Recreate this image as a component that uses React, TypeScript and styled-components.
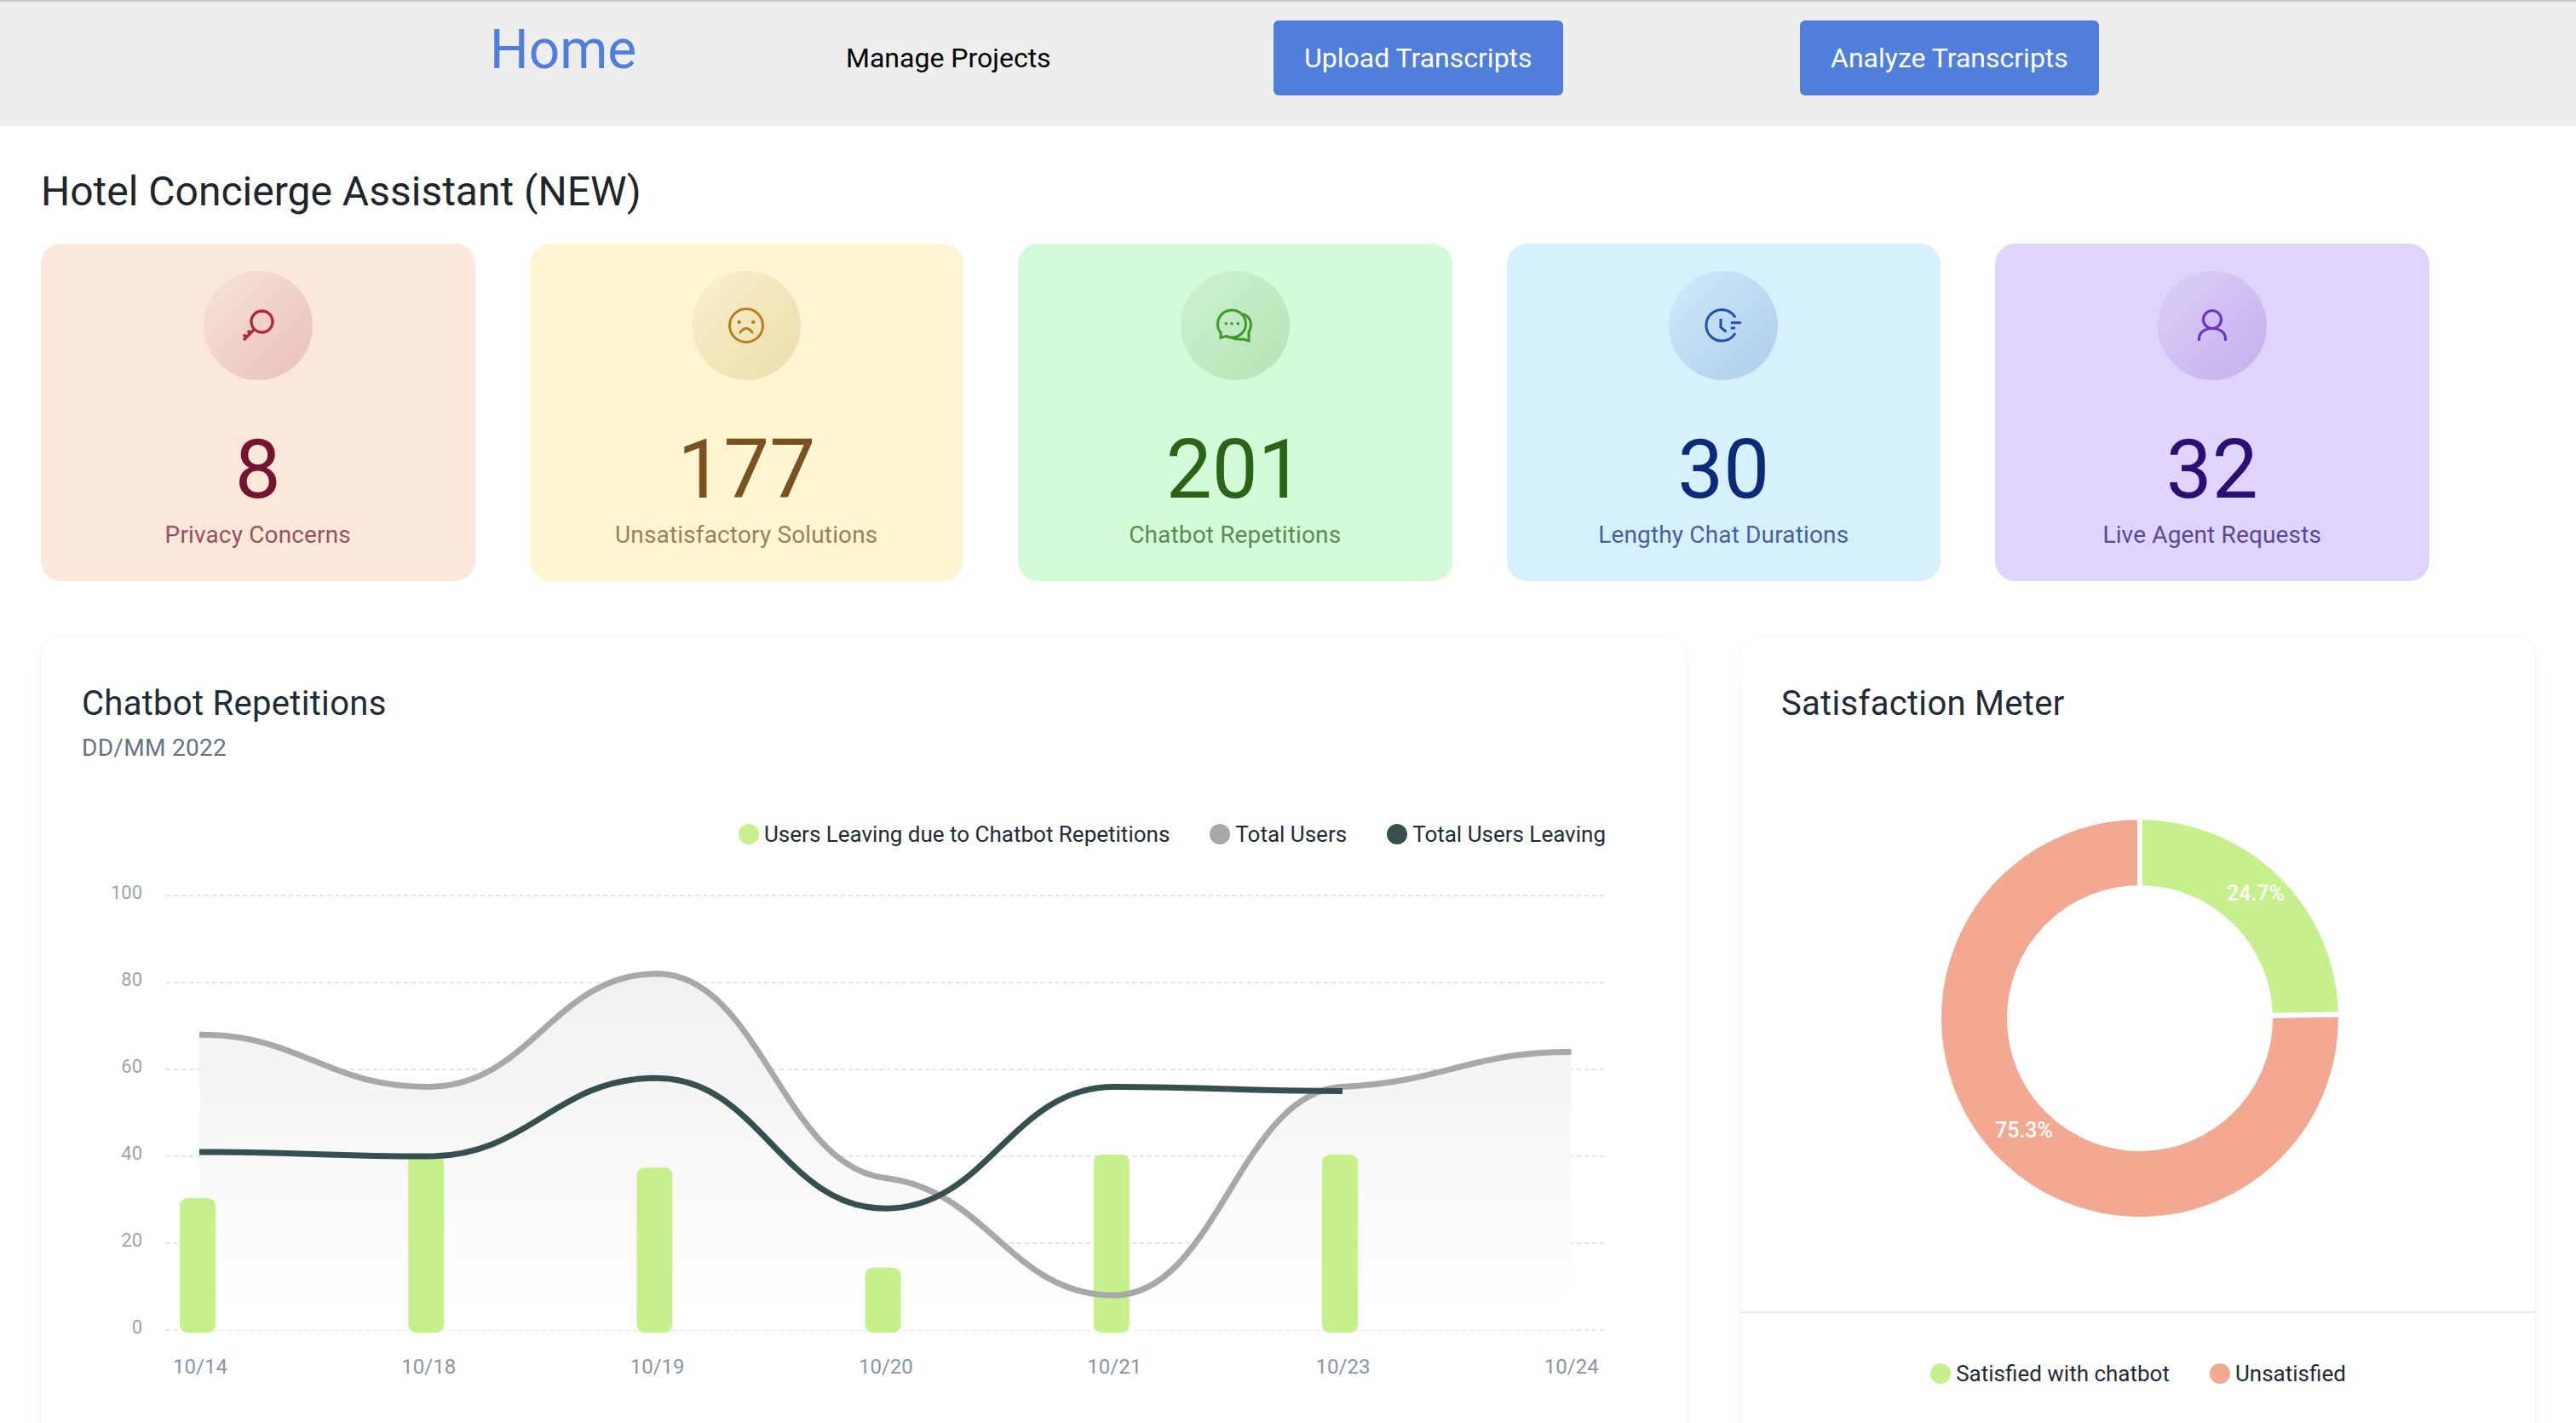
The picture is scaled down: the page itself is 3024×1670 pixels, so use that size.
import React from "react";
import styled, { createGlobalStyle } from "styled-components";

const GlobalStyle = createGlobalStyle`
  html, body {
    margin: 0;
    padding: 0;
    background: #fff;
    font-family: Roboto, "Liberation Sans", sans-serif;
  }
  * { box-sizing: border-box; }
`;

const Page = styled.div`
  width: 3024px;
  height: 1670px;
  overflow: hidden;
  background: #fff;
`;

const NavBar = styled.nav`
  display: grid;
  grid-template-columns: 418px 502px 618px auto;
  align-items: start;
  height: 148px;
  padding: 22px 0 0 575px;
  border-top: 2px solid #c9c9c9;
  background: #eeeeee;
`;

const HomeLink = styled.a`
  font-size: 64px;
  line-height: 75px;
  margin-top: -3px;
  color: #4f7edb;
`;

const NavLink = styled.a`
  font-size: 32px;
  line-height: 88px;
  color: #000;
`;

const NavButton = styled.button`
  justify-self: start;
  height: 88px;
  padding: 0 36px;
  border: none;
  border-radius: 6px;
  background: #4f7edb;
  color: #fff;
  font-family: inherit;
  font-size: 32px;
`;

const Main = styled.main`
  padding: 0 48px;
`;

const Heading = styled.h1`
  margin: 0;
  height: 138px;
  padding-top: 47px;
  font-size: 48px;
  line-height: 60px;
  font-weight: 400;
  color: #212529;
`;

const StatRow = styled.div`
  display: flex;
  gap: 64px;
`;

const StatCard = styled.div<{ $bg: string; $fg: string }>`
  display: flex;
  flex-direction: column;
  align-items: center;
  width: 509.5px;
  height: 396px;
  padding-top: 32px;
  border-radius: 24px;
  background: ${(p) => p.$bg};
  color: ${(p) => p.$fg};
`;

const IconBadge = styled.div<{ $from: string; $to: string }>`
  display: flex;
  align-items: center;
  justify-content: center;
  width: 128px;
  height: 128px;
  border-radius: 50%;
  background: linear-gradient(135deg, ${(p) => p.$from}, ${(p) => p.$to});
`;

const StatValue = styled.div`
  margin-top: 49px;
  font-size: 96px;
  line-height: 112px;
`;

const StatLabel = styled.div`
  margin-top: 3px;
  font-size: 28px;
  line-height: 36px;
  letter-spacing: 0.15px;
  opacity: 0.72;
`;

const PanelRow = styled.div`
  display: flex;
  gap: 64px;
  margin-top: 64px;
`;

const Panel = styled.section<{ $width: number }>`
  flex: none;
  width: ${(p) => p.$width}px;
  height: 1000px;
  border-radius: 24px;
  background: #fff;
  box-shadow: 0 0 2px rgba(145, 158, 171, 0.2), 0 12px 24px -4px rgba(145, 158, 171, 0.12);
`;

const PanelHeader = styled.header`
  padding: 50px 48px 0;
`;

const PanelTitle = styled.h2`
  margin: 0;
  font-size: 40px;
  line-height: 60px;
  font-weight: 400;
  letter-spacing: 0.3px;
  color: #212b36;
`;

const PanelSub = styled.div`
  margin-top: 2px;
  font-size: 28px;
  line-height: 40px;
  letter-spacing: 0.3px;
  color: #637381;
`;

const Legend = styled.div<{ $center?: boolean }>`
  display: flex;
  align-items: center;
  justify-content: ${(p) => (p.$center ? "center" : "flex-end")};
  gap: 47px;
`;

const ChartLegend = styled(Legend)`
  height: 40px;
  margin-top: 61px;
  padding-right: 94px;
`;

const DonutLegend = styled(Legend)`
  height: 144px;
  margin-top: -1px;
  border-top: 2px solid #e6e8eb;
  padding-left: 1px;
`;

const LegendItem = styled.div`
  display: flex;
  align-items: center;
  gap: 6px;
  font-size: 26px;
  color: #212b36;
`;

const LegendDot = styled.span<{ $color: string }>`
  flex: none;
  width: 24px;
  height: 24px;
  border-radius: 50%;
  background: ${(p) => p.$color};
`;

const ChartSvg = styled.svg`
  display: block;
  margin-top: 11px;
`;

const DonutSvg = styled.svg`
  display: block;
`;

const GREEN = "#c6f08c";
const SALMON = "#f3a892";
const GREY = "#a8a8a8";
const DARK = "#35504f";

// key
const KeyIcon = () => (
  <svg width="64" height="64" viewBox="0 0 64 64" fill="none" stroke="#b02a3a" strokeWidth="3.4">
    <circle cx="36.5" cy="27.5" r="12.5" />
    <path d="M27.5 36.5L15 49M23 41.5l-3-3.5M18.5 46l-3.5-3.5" strokeWidth="3.6" />
  </svg>
);

const SadIcon = () => (
  <svg width="64" height="64" viewBox="0 0 64 64" fill="none" stroke="#b58022" strokeWidth="3">
    <circle cx="32" cy="32" r="19.5" />
    <circle cx="23.7" cy="28" r="2.2" fill="#b58022" stroke="none" />
    <circle cx="40.3" cy="28" r="2.2" fill="#b58022" stroke="none" />
    <path d="M25 40c2-3 4.500-4.500 7-4.500s5 1.500 7 4.500" strokeLinecap="round" />
  </svg>
);

const ChatIcon = () => (
  <svg width="64" height="64" viewBox="0 0 64 64" fill="none" stroke="#3f9a2a" strokeWidth="3">
    <path d="M15 46.500V40.500C12.500 37.500 11.500 34 11.500 30.500C11.500 21 19 14 28 14C37 14 44.500 21 44.500 30C44.500 39 37 46 28 46C25 46 23 45.300 21 44.500Z" />
    <path d="M41 18.500C47 20 50.500 25.500 50.500 31C50.500 34.500 49.500 37 48 39.500V50L41.500 48C36 48.500 31 47.500 27 46" />
    <circle cx="21.300" cy="29.700" r="1.800" fill="#3f9a2a" stroke="none" />
    <circle cx="28" cy="29.700" r="1.800" fill="#3f9a2a" stroke="none" />
    <circle cx="35.300" cy="29.700" r="1.800" fill="#3f9a2a" stroke="none" />
  </svg>
);

const ClockIcon = () => (
  <svg width="64" height="64" viewBox="0 0 64 64" fill="none" stroke="#2350ad" strokeWidth="3">
    <path d="M46 22.500A18.300 18.300 0 1 0 46 41" />
    <path d="M29 24V34L35.400 39.500" />
    <path d="M40.800 28.700H52.800M40.800 35H46" />
  </svg>
);

const UserIcon = () => (
  <svg width="64" height="64" viewBox="0 0 64 64" fill="none" stroke="#6a38c7" strokeWidth="3.2">
    <ellipse cx="32" cy="25" rx="10.500" ry="10.500" />
    <path d="M16.500 50V48C16.500 40 23 35.500 32 35.500C41 35.500 47.500 40 47.500 48V50" />
  </svg>
);

const stats = [
  { value: "8", label: "Privacy Concerns", bg: "#fbe8db", fg: "#74142f", from: "#f8e4da", to: "#e8bfb8", Icon: KeyIcon },
  { value: "177", label: "Unsatisfactory Solutions", bg: "#fef6d3", fg: "#7a5220", from: "#f9f0cd", to: "#ebdcaa", Icon: SadIcon },
  { value: "201", label: "Chatbot Repetitions", bg: "#d3fbd7", fg: "#2b6318", from: "#cdf2cf", to: "#b5e3b5", Icon: ChatIcon },
  { value: "30", label: "Lengthy Chat Durations", bg: "#d6f1fd", fg: "#0c2a7a", from: "#cfeafa", to: "#acccea", Icon: ClockIcon },
  { value: "32", label: "Live Agent Requests", bg: "#dfd4fb", fg: "#2b0f75", from: "#dbcff8", to: "#c3b0ec", Icon: UserIcon },
];

// chart coords below are local to the svg, which starts at page (48, 1010)
const ORIGIN_X = 186;
const STEP_X = 268.4;
const ZERO_Y = 551;
const UNIT_Y = 5.1;

const toPoints = (values: number[]) =>
  values.map((v, i) => [ORIGIN_X + i * STEP_X, ZERO_Y - v * UNIT_Y] as [number, number]);

// cubic through the points, nearly flat at every point like the chart lib does
function smoothPath(pts: [number, number][]) {
  const slopes = pts.slice(1).map((p, i) => (p[1] - pts[i][1]) / (p[0] - pts[i][0]));
  const tangents = pts.map((_, i) => {
    if (i === 0 || i === pts.length - 1) return 0;
    const a = slopes[i - 1];
    const b = slopes[i];
    if (a * b <= 0) return 0;
    return ((2 * a * b) / (a + b)) * 0.18;
  });
  let d = `M${pts[0][0]} ${pts[0][1]}`;
  for (let i = 0; i < pts.length - 1; i++) {
    const dx = (pts[i + 1][0] - pts[i][0]) * 0.45;
    d += `C${pts[i][0] + dx} ${pts[i][1] + tangents[i] * dx} ${pts[i + 1][0] - dx} ${pts[i + 1][1] - tangents[i + 1] * dx} ${pts[i + 1][0]} ${pts[i + 1][1]}`;
  }
  return d;
}

const totalUsers = toPoints([68, 56, 82, 35, 8, 56, 64]);
const totalLeaving = toPoints([41, 40, 58, 28, 56, 55]);
const bars = [30, 40, 37, 14, 40, 40];
const bucketLabels = ["10/14", "10/18", "10/19", "10/20", "10/21", "10/23", "10/24"];

function LineChart() {
  const gray = smoothPath(totalUsers);
  const last = totalUsers[totalUsers.length - 1];
  return (
    <ChartSvg width="1931" height="660" viewBox="0 0 1931 660">
      <defs>
        <linearGradient id="areaFill" x1="0" y1="0" x2="0" y2="1">
          <stop offset="0" stopColor="#f0f0f0" />
          <stop offset="0.95" stopColor="#ffffff" />
        </linearGradient>
      </defs>
      {[100, 80, 60, 40, 20, 0].map((v) => (
        <g key={v}>
          <line x1="147" x2="1835" y1={ZERO_Y - v * UNIT_Y} y2={ZERO_Y - v * UNIT_Y} stroke="#e3e5e8" strokeWidth="2" strokeDasharray="5 4" />
          <text x="119" y={ZERO_Y - v * UNIT_Y + 4} textAnchor="end" fontSize="22" fill="#9aa3ae">{v}</text>
        </g>
      ))}
      <path d={`${gray}L${last[0]} ${ZERO_Y}L${ORIGIN_X} ${ZERO_Y}Z`} fill="url(#areaFill)" />
      {bars.map((v, i) => (
        <rect key={i} x={ORIGIN_X - 23 + i * 268.2} y={ZERO_Y - 2 - v * UNIT_Y} width="42" height={v * UNIT_Y + 5} rx="9" fill={GREEN} />
      ))}
      <path d={gray} fill="none" stroke={GREY} strokeWidth="7" />
      <path d={smoothPath(totalLeaving)} fill="none" stroke={DARK} strokeWidth="7" />
      {bucketLabels.map((t, i) => (
        <text key={t} x={ORIGIN_X + 1 + i * 268.3} y="602" textAnchor="middle" fontSize="24" fill="#8a94a3">{t}</text>
      ))}
    </ChartSvg>
  );
}

const CX = 469;
const CY = 339;
const polar = (r: number, deg: number) => {
  const a = (deg * Math.PI) / 180;
  return `${CX + r * Math.sin(a)} ${CY - r * Math.cos(a)}`;
};
const ringSlice = (from: number, to: number) => {
  const large = to - from > 180 ? 1 : 0;
  return `M${polar(236, from)}A236 236 0 ${large} 1 ${polar(236, to)}L${polar(153, to)}A153 153 0 ${large} 0 ${polar(153, from)}Z`;
};

function Donut() {
  return (
    <DonutSvg width="933" height="684" viewBox="0 0 933 684">
      <path d={ringSlice(0, 88.9)} fill={GREEN} stroke="#fff" strokeWidth="6" />
      <path d={ringSlice(88.9, 360)} fill={SALMON} stroke="#fff" strokeWidth="6" />
      <text x="605" y="201" textAnchor="middle" fontSize="25" fontWeight="500" fill="#fff">24.7%</text>
      <text x="333" y="479" textAnchor="middle" fontSize="25" fontWeight="500" fill="#fff">75.3%</text>
    </DonutSvg>
  );
}

export default function App() {
  return (
    <Page>
      <GlobalStyle />
      <NavBar>
        <HomeLink>Home</HomeLink>
        <NavLink>Manage Projects</NavLink>
        <NavButton>Upload Transcripts</NavButton>
        <NavButton>Analyze Transcripts</NavButton>
      </NavBar>
      <Main>
        <Heading>Hotel Concierge Assistant (NEW)</Heading>
        <StatRow>
          {stats.map(({ value, label, bg, fg, from, to, Icon }) => (
            <StatCard key={label} $bg={bg} $fg={fg}>
              <IconBadge $from={from} $to={to}>
                <Icon />
              </IconBadge>
              <StatValue>{value}</StatValue>
              <StatLabel>{label}</StatLabel>
            </StatCard>
          ))}
        </StatRow>
        <PanelRow>
          <Panel $width={1931}>
            <PanelHeader>
              <PanelTitle>Chatbot Repetitions</PanelTitle>
              <PanelSub>DD/MM 2022</PanelSub>
            </PanelHeader>
            <ChartLegend>
              <LegendItem><LegendDot $color={GREEN} />Users Leaving due to Chatbot Repetitions</LegendItem>
              <LegendItem><LegendDot $color={GREY} />Total Users</LegendItem>
              <LegendItem><LegendDot $color={DARK} />Total Users Leaving</LegendItem>
            </ChartLegend>
            <LineChart />
          </Panel>
          <Panel $width={933}>
            <PanelHeader>
              <PanelTitle>Satisfaction Meter</PanelTitle>
            </PanelHeader>
            <Donut />
            <DonutLegend $center>
              <LegendItem><LegendDot $color={GREEN} />Satisfied with chatbot</LegendItem>
              <LegendItem><LegendDot $color={SALMON} />Unsatisfied</LegendItem>
            </DonutLegend>
          </Panel>
        </PanelRow>
      </Main>
    </Page>
  );
}
